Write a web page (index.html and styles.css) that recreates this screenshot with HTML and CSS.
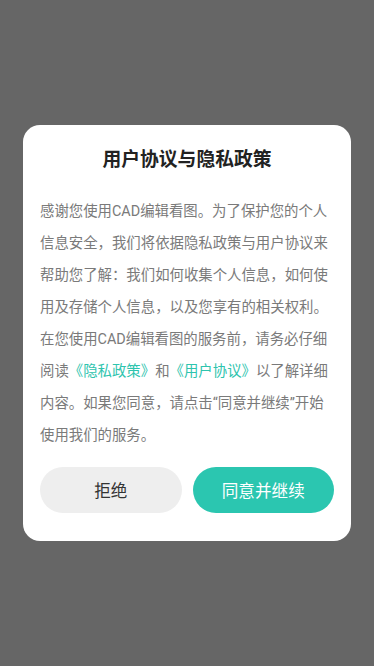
FILE: index.html
```html
<!DOCTYPE html>
<html lang="zh-CN">
<head>
<meta charset="utf-8">
<title>用户协议与隐私政策</title>
<link rel="stylesheet" href="styles.css">
</head>
<body>
<div class="overlay">
  <div class="dialog">
    <h1 class="title">用户协议与隐私政策</h1>
    <p class="body">感谢您使用CAD编辑看图。为了保护您的个人信息安全，我们将依据隐私政策与用户协议来帮助您了解：我们如何收集个人信息，如何使用及存储个人信息，以及您享有的相关权利。在您使用CAD编辑看图的服务前，请务必仔细阅读<span class="link">《隐私政策》</span>和<span class="link">《用户协议》</span>以了解详细内容。如果您同意，请点击“同意并继续”开始使用我们的服务。</p>
    <div class="actions">
      <button class="btn btn-reject">拒绝</button>
      <button class="btn btn-accept">同意并继续</button>
    </div>
  </div>
</div>
</body>
</html>
```
FILE: styles.css
```css
html, body {
  margin: 0;
  padding: 0;
  height: 100%;
}
body {
  background: #666666;
  font-family: Roboto, "Noto Sans CJK SC", sans-serif;
}
.overlay {
  height: 100%;
  display: flex;
  align-items: center;
  justify-content: center;
}
.dialog {
  width: 328px;
  background: #ffffff;
  border-radius: 17px;
  padding: 24px 17px 28px;
  box-sizing: border-box;
}
.title {
  margin: 0;
  font-size: 18.8px;
  line-height: 22px;
  font-weight: 700;
  color: #222222;
  text-align: center;
}
.body {
  margin: 25px 0 0;
  font-size: 14.4px;
  line-height: 32px;
  color: #7a7a7a;
}
.link {
  color: #2ec4ae;
}
.actions {
  margin-top: 15px;
  display: flex;
  gap: 11px;
}
.btn {
  flex: 1;
  height: 46px;
  border: none;
  border-radius: 23px;
  font-family: Roboto, "Noto Sans CJK SC", sans-serif;
  font-size: 16.6px;
  padding: 0;
}
.btn-reject {
  background: #eeeeee;
  color: #333333;
}
.btn-accept {
  background: #2bc6b0;
  color: #ffffff;
}
```
